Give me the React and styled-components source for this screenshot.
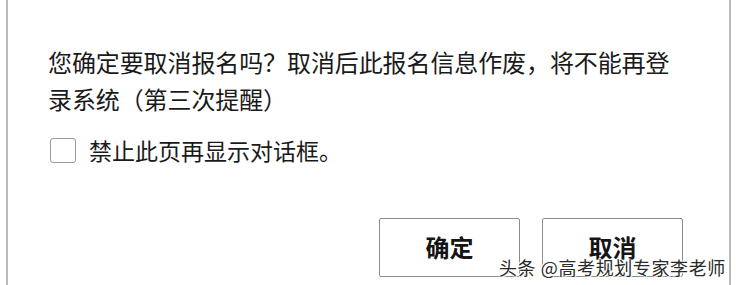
import React from 'react'
import styled, { createGlobalStyle } from 'styled-components'

const GlobalStyle = createGlobalStyle`
  html, body {
    margin: 0;
    padding: 0;
    background: #ffffff;
  }
  body {
    font-family: "Noto Sans CJK SC", "Noto Sans", sans-serif;
    color: #1e1e1e;
  }
`

const Page = styled.div`
  position: relative;
  width: 736px;
  height: 285px;
  overflow: hidden;
  background: #ffffff;
`

const Dialog = styled.div`
  box-sizing: border-box;
  margin-left: 6px;
  width: 725px;
  height: 285px;
  border-left: 2px solid #b9b9b9;
  border-right: 2px solid #b9b9b9;
  padding: 43px 46px 0 40px;
  display: flex;
  flex-direction: column;
`

const Message = styled.p`
  margin: 0;
  font-size: 24px;
  line-height: 37px;
  letter-spacing: -0.1px;
  color: #1a1a1a;
`

const CheckRow = styled.label`
  margin-top: 20px;
  display: flex;
  align-items: center;
  gap: 13px;
  padding-left: 2px;
  font-size: 23px;
  line-height: 26px;
  color: #1a1a1a;
`

const Box = styled.span`
  box-sizing: border-box;
  width: 26px;
  height: 25px;
  border: 1px solid #9a9a9a;
  border-radius: 3px;
  background: #ffffff;
`

const Actions = styled.div`
  margin-top: 55px;
  display: flex;
  justify-content: flex-end;
  gap: 22px;
`

const Button = styled.button`
  box-sizing: border-box;
  width: 141px;
  height: 59px;
  border: 1px solid #8c8c8c;
  border-radius: 2px;
  background: #ffffff;
  font-family: "Noto Sans CJK SC", "Noto Sans", sans-serif;
  font-size: 24px;
  font-weight: ${(p) => (p.$primary ? 700 : 600)};
  color: #151515;
  padding: 0 0 2px;
`

const Watermark = styled.div`
  position: absolute;
  left: 499px;
  top: 255px;
  font-size: 18px;
  line-height: 24px;
  letter-spacing: 0.6px;
  color: #2a2a2a;
  white-space: nowrap;
  text-shadow: 0 0 2px #fff, 0 0 2px #fff, 1px 1px 1px #fff, -1px -1px 1px #fff;
`

export default function App() {
  return (
    <Page>
      <GlobalStyle />
      <Dialog>
        <Message>
          您确定要取消报名吗？取消后此报名信息作废，将不能再登
          <br />
          录系统（第三次提醒）
        </Message>
        <CheckRow>
          <Box />
          禁止此页再显示对话框。
        </CheckRow>
        <Actions>
          <Button $primary>确定</Button>
          <Button>取消</Button>
        </Actions>
      </Dialog>
      <Watermark>头条 @高考规划专家李老师</Watermark>
    </Page>
  )
}
